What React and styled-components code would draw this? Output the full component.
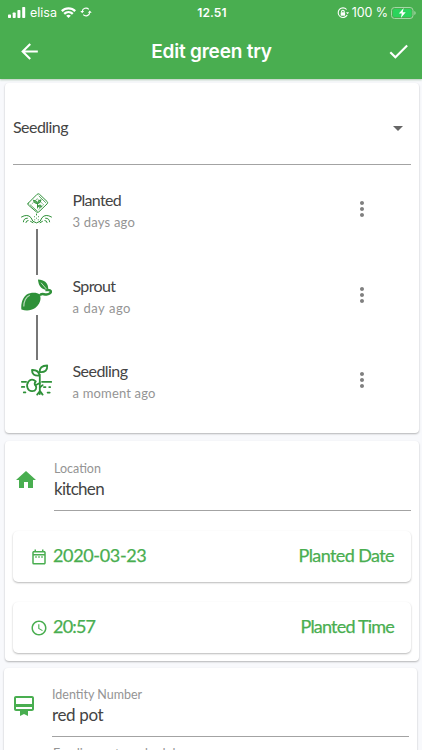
import React from "react";
import styled, { createGlobalStyle } from "styled-components";
import {
  MdArrowBack, MdCheck, MdArrowDropDown, MdMoreVert, MdHome,
  MdOutlineDateRange, MdAccessTime, MdOutlineCardMembership,
} from "react-icons/md";

const GREEN = "#49ae50";
const PLANT = "#2f9139";

const Global = createGlobalStyle`
  * { box-sizing: border-box; }
  body { margin: 0; background: #f8f9fc; overflow: hidden; }
`;
const Screen = styled.main`
  width: 422px; height: 750px; overflow: hidden;
  display: flex; flex-direction: column;
  font-family: Lato, "Open Sans", sans-serif; color: #444;
  background: #f8f9fc;
`;
const Header = styled.header`
  height: 79px; flex: none; background: ${GREEN}; color: #fff;
  font-family: Inter, Roboto, sans-serif;
  box-shadow: 0 1px 2px rgba(60, 120, 60, 0.35);
`;
const StatusBar = styled.div`
  height: 24px; padding: 0 6px 0 8px;
  display: grid; grid-template-columns: 1fr auto 1fr; align-items: center;
  font-size: 12px; line-height: 24px;
`;
const StatusGroup = styled.div`
  display: flex; align-items: center; gap: ${(p) => p.$gap}px;
  justify-content: ${(p) => (p.$end ? "flex-end" : "flex-start")};
`;
const Clock = styled.span`font-weight: 600; letter-spacing: 0.1px; padding-top: 1px;`;
const StatusText = styled.span`
  padding-top: 1px; font-size: 12.5px; letter-spacing: ${(p) => p.$track || 0}px;
`;
const NavBar = styled.nav`
  height: 54px; padding: 0 12px 0 17px;
  display: grid; grid-template-columns: 24px 1fr 24px; align-items: center;
  svg { display: block; }
`;
const Title = styled.h1`
  margin: 1px 0 0 -4px; text-align: center; font-size: 19px; font-weight: 600;
  line-height: 24px; letter-spacing: -0.2px;
`;
const Card = styled.section`
  flex: none; width: ${(p) => p.$width || 414}px; height: ${(p) => p.$height}px;
  margin: ${(p) => p.$top}px 0 0 ${(p) => p.$left || 5}px;
  border-radius: 4px; background: #fff;
  box-shadow: 0 1px 2px rgba(0, 0, 0, 0.28);
`;
const Label = styled.span`
  display: block; white-space: pre;
  font-size: ${(p) => p.$size}px; line-height: ${(p) => p.$line}px;
  letter-spacing: ${(p) => p.$track || 0}px;
  color: ${(p) => (p.$muted ? "#949494" : "#444")};
`;
const Select = styled.div`
  height: 82px; margin: 0 8px; padding-top: 7px; border-bottom: 1.5px solid #a3a3a3;
  display: flex; align-items: center; justify-content: space-between;
  svg { margin: 2px 1px 0 0; }
`;
const Steps = styled.div`padding-top: 24px;`;
const Step = styled.div`
  height: 85.7px; padding-left: 16px;
  display: grid; grid-template-columns: 31px 260px 24px; column-gap: 20.5px;
  align-items: start;
`;
const StepRail = styled.div`
  height: 85.7px; padding-top: 4px; display: flex; flex-direction: column; align-items: center;
  svg { flex: none; }
`;
const Connector = styled.i`width: 2px; height: 47px; margin-top: 4px; background: #777;`;
const StepText = styled.div`padding-top: 1px; display: flex; flex-direction: column; gap: 3px;`;
const More = styled(MdMoreVert)`margin: 8px 0 0 -3.5px; color: #808080;`;
const Field = styled.div`
  display: grid; grid-template-columns: 24px 1fr; column-gap: ${(p) => p.$gap}px;
  height: ${(p) => p.$height}px; padding: 0 8px 0 ${(p) => p.$inset}px;
`;
const FieldIcon = styled.div`
  padding-top: ${(p) => p.$top}px; color: ${GREEN};
  svg { display: block; }
`;
const FieldBody = styled.div`
  padding-top: ${(p) => p.$top}px; border-bottom: 1.5px solid #a3a3a3;
`;
const PickRow = styled.div`
  height: 51px; margin: ${(p) => p.$top}px 8px 0; padding: 0 17px;
  display: flex; align-items: center; gap: 5px;
  border-radius: 5px; color: ${GREEN};
  box-shadow: 0 1px 2px rgba(0, 0, 0, 0.28);
`;
const PickText = styled.span`
  font-size: 18px; line-height: 24px; white-space: pre; -webkit-text-stroke: 0.25px ${GREEN};
  letter-spacing: ${(p) => p.$track || 0}px;
  margin: -3px 0 0 ${(p) => (p.$end ? "auto" : "0")};
`;
const NextLabel = styled.div`padding: 8px 0 0 49px;`;

const Signal = () => (
  <svg width="18" height="11" viewBox="0 0 18 11" fill="#fff">
    <rect x="0" y="7.5" width="3" height="3.5" rx=".7" /><rect x="4.7" y="5.5" width="3" height="5.5" rx=".7" />
    <rect x="9.4" y="3" width="3" height="8" rx=".7" /><rect x="14.2" y="0" width="3" height="11" rx=".7" />
  </svg>
);
const Wifi = () => (
  <svg width="15" height="11" viewBox="0 0 15 11" fill="none" stroke="#fff" strokeWidth="2.3">
    <path d="M.8 4.1C4.5.4 10.5.4 14.2 4.1M3.2 6.9C5.7 4.5 9.3 4.5 11.8 6.9" />
    <path d="M7.5 11 5.2 8.8q2.3-1.9 4.6 0z" fill="#fff" stroke="none" />
  </svg>
);
const Sync = () => (
  <svg width="12" height="12" viewBox="0 0 12 12" fill="none" stroke="#fff" strokeWidth="1.1">
    <path d="M2.2 4.5A3.8 3.8 0 0 1 8.8 2.4M9.8 5.3A3.8 3.8 0 0 1 3.2 7.6" />
    <path d="M.3 4h3.8L2.2 6.3zM7.9 5.8h3.8L9.8 3.5z" fill="#fff" stroke="none" />
  </svg>
);
const Lock = () => (
  <svg width="12" height="12" viewBox="0 0 12 12" fill="none" stroke="#fff" strokeWidth="1.1">
    <path d="M9.6 2.5A4.8 4.8 0 1 0 10.2 8" /><path d="M9 5.2h3l-1.3 2z" fill="#fff" stroke="none" />
    <path d="M4.6 5.4V4.5a1.3 1.3 0 0 1 2.6 0v.9" /><rect x="3.7" y="5.3" width="4.4" height="3.4" fill="#fff" stroke="none" />
  </svg>
);
const Battery = () => (
  <svg width="25" height="12" viewBox="0 0 25 12">
    <rect x=".5" y=".5" width="21.5" height="11" rx="3" fill="none" stroke="#a5d7a7" />
    <rect x="2" y="2" width="18.5" height="8" rx="1.6" fill="#2bd45c" />
    <path d="M23.3 4q1.4.4 1.4 2t-1.4 2z" fill="#a5d7a7" />
    <path d="M12.7 1 7.8 6.6h3L9.9 11l4.8-5.7h-3z" fill="#fff" />
  </svg>
);
const Sowing = () => (
  <svg width="31" height="32" viewBox="0 0 31 32" fill="none" stroke={PLANT} strokeWidth="1" strokeLinecap="round">
    <path d="M7.2 10.2 16.1 1.3q1.2-1 2.4 0l7.6 7.2q1.1 1.2 0 2.4l-8.3 8q-1.2 1.1-2.4 0l-8.2-7q-1-.9 0-1.7z" />
    <path d="m9 11.7 7.5 6.6M18 3.1l6.6 6.4" strokeWidth=".8" />
    <path d="m11 10.8 5.2-5.1 6.4 6-5.4 5.3" strokeWidth=".6" strokeDasharray="2 1" />
    <path d="M16.5 15v-4.2q-4-.6-4.1-3.6 4 .2 4.1 3.6 0-4 3.6-4-.1 3.2-3.6 4m0 2.3q3.4-2.4 4.2.5-2 1.8-4.2-.5" fill="#78b87d" strokeWidth=".9" />
    <path d="M.5 24q6-3.5 9.5.7 1 4.5 5.5 5.2 4.5-.7 5.5-5.2 3.5-4.2 9.5-.7M2.4 28.8q.2-3.7 4-3.6M4.9 29.5q.2-1.9 2.2-2M28.6 28.8q-.2-3.7-4-3.6M26.1 29.5q-.2-1.9-2.2-2M9.5 28.3l2.4 1.4m9.6-1.4-2.4 1.4" />
    <path d="M15.5 21v1m-2 1.7v.1m4-.1v.1m-2 1.3v.1m-1.8 1.6v.1m3.6-.1v.1" />
  </svg>
);
const Sprout = () => (
  <svg width="31" height="32" viewBox="0 0 31 32">
    <path d="M.4 30.5C-.5 23 3 15.2 9 14.2c4-.9 7.7-.4 9.7 1.5 2.3 4.5-.4 10.3-4.5 13.3C10.1 31.8 5 32 .4 30.5z" fill={PLANT} />
    <path d="M2.8 27.5c-.1-5.1 2.2-10 6-11.3" fill="none" stroke="#b9dabb" strokeWidth="1.2" />
    <path d="M18.8 16.5c1.8-3.2 4.2-.6 6.7-1 3.5-.6 4.8-2 4.2-3.6-.6-1.4-2.8-.6-5.2-1" fill="none" stroke={PLANT} strokeWidth="2.5" />
    <path d="M17 .5c6 .2 10.6 3.3 10.2 10C20.5 11.8 17.2 6 17 .5z" fill={PLANT} />
    <path d="m20 3.7 5.5 6.5" stroke="#fff" strokeWidth=".7" />
  </svg>
);
const Seedling = () => (
  <svg width="31" height="32" viewBox="0 0 31 32" fill="none" stroke={PLANT} strokeWidth="1.8" strokeLinecap="round" strokeLinejoin="round">
    <path d="M18.8 30V10.5M18.8 8Q18.2 1.8 26.2 1.5 26.8 8.7 18.8 8zM18.5 11.5Q17.8 5.7 11 6q-.3 6.2 7.5 5.5z" />
    <path d="M14.8 17.3q-4-3.6-7.3.2c-3 4.2-.8 10 3.8 9.7 3.7-.1 4.8-3.7 3.2-5.8q-1.8-2 .3-4.1z" />
    <path d="M.8 17.8h4.3M21 17.8h9.3M14.5 21.3l4.3-2.3m.3 4.2 2.5-2.1m-2.8 6.2-2.6 3.3m3-3.2 2.4 3.2M.8 22.9h2.5m-.5 5.5h1.6m18.5-5.3h1.6m3.7 0h1m-2.6 5.5h2.1" />
  </svg>
);

const steps = [
  { name: "Planted", when: "3 days ago", Icon: Sowing, track: -0.65, subTrack: 0.2 },
  { name: "Sprout", when: "a day ago", Icon: Sprout, track: -0.65, subTrack: 0.55 },
  { name: "Seedling", when: "a moment ago", Icon: Seedling, track: -0.55, subTrack: 0.17 },
];

export default function App() {
  return (
    <Screen>
      <Global />
      <Header>
        <StatusBar>
          <StatusGroup $gap={4}><Signal /><StatusText>elisa</StatusText><Wifi /><Sync /></StatusGroup>
          <Clock>12.51</Clock>
          <StatusGroup $gap={3} $end><Lock /><StatusText $track={-0.1}>100 %</StatusText><Battery /></StatusGroup>
        </StatusBar>
        <NavBar><MdArrowBack size={25} /><Title>Edit green try</Title><MdCheck size={25} /></NavBar>
      </Header>
      <Card $top={4} $height={350}>
        <Select>
          <Label $size={16} $line={20} $track={-0.55}>Seedling</Label>
          <MdArrowDropDown size={24} color="#666" />
        </Select>
        <Steps>
          {steps.map(({ name, when, Icon, track, subTrack }, i) => (
            <Step key={name}>
              <StepRail><Icon />{i < steps.length - 1 && <Connector />}</StepRail>
              <StepText>
                <Label $size={16} $line={20} $track={track}>{name}</Label>
                <Label $size={13} $line={18} $track={subTrack} $muted>{when}</Label>
              </StepText>
              <More size={24} />
            </Step>
          ))}
        </Steps>
      </Card>
      <Card $top={8} $height={220}>
        <Field $inset={9} $gap={16} $height={70}>
          <FieldIcon $top={27}><MdHome size={24} /></FieldIcon>
          <FieldBody $top={19}>
            <Label $size={12.5} $line={18} $muted>Location</Label>
            <Label $size={17} $line={22} $track={-0.7}>kitchen</Label>
          </FieldBody>
        </Field>
        <PickRow $top={20}>
          <MdOutlineDateRange size={18} />
          <PickText $track={-0.35}>2020-03-23</PickText>
          <PickText $end $track={-0.6}>Planted Date</PickText>
        </PickRow>
        <PickRow $top={20}>
          <MdAccessTime size={18} />
          <PickText $track={-0.8}>20:57</PickText>
          <PickText $end $track={-0.8}>Planted Time</PickText>
        </PickRow>
      </Card>
      <Card $top={7} $left={4} $width={413} $height={120}>
        <Field $inset={8} $gap={16} $height={69}>
          <FieldIcon $top={26}><MdOutlineCardMembership size={24} /></FieldIcon>
          <FieldBody $top={18}>
            <Label $size={12.5} $line={18} $muted>Identity Number</Label>
            <Label $size={17} $line={22} $track={-0.35}>red pot</Label>
          </FieldBody>
        </Field>
        <NextLabel><Label $size={12.5} $line={18} $muted>Feeding water schedule</Label></NextLabel>
      </Card>
    </Screen>
  );
}
